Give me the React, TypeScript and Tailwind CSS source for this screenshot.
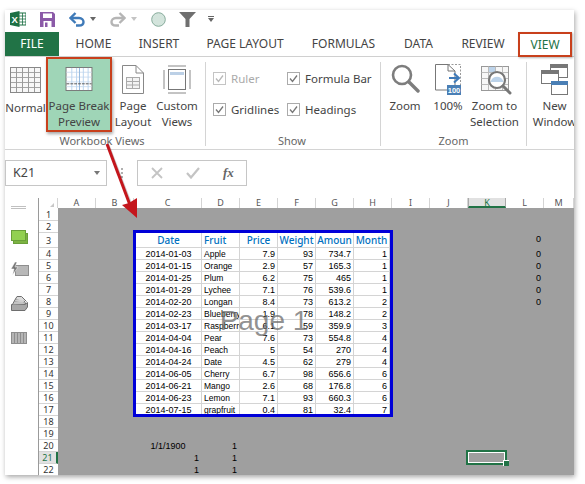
import React from "react";

const ui = "font-['Noto_Sans','Open_Sans',sans-serif]";

const tabs: [string, string][] = [
  ["HOME", "w-[63px]"],
  ["INSERT", "w-[68px]"],
  ["PAGE LAYOUT", "w-[104px]"],
  ["FORMULAS", "w-[93px]"],
  ["DATA", "w-[57px]"],
  ["REVIEW", "w-[72px]"],
];

const rows: string[][] = [
  ["2014-01-03", "Apple", "7.9", "93", "734.7", "1"],
  ["2014-01-15", "Orange", "2.9", "57", "165.3", "1"],
  ["2014-01-25", "Plum", "6.2", "75", "465", "1"],
  ["2014-01-29", "Lychee", "7.1", "76", "539.6", "1"],
  ["2014-02-20", "Longan", "8.4", "73", "613.2", "2"],
  ["2014-02-23", "Blueberry", "1.9", "78", "148.2", "2"],
  ["2014-03-17", "Raspberry", "6.1", "59", "359.9", "3"],
  ["2014-04-04", "Pear", "7.6", "73", "554.8", "4"],
  ["2014-04-16", "Peach", "5", "54", "270", "4"],
  ["2014-04-24", "Date", "4.5", "62", "279", "4"],
  ["2014-06-05", "Cherry", "6.7", "98", "656.6", "6"],
  ["2014-06-21", "Mango", "2.6", "68", "176.8", "6"],
  ["2014-06-23", "Lemon", "7.1", "93", "660.3", "6"],
  ["2014-07-15", "grapfruit", "0.4", "81", "32.4", "7"],
];

const colHeaders: [string, string][] = [
  ["A", "w-[38px]"], ["B", "w-[38px]"], ["C", "w-[68px]"], ["D", "w-[38px]"], ["E", "w-[38px]"],
  ["F", "w-[38px]"], ["G", "w-[38px]"], ["H", "w-[38px]"], ["I", "w-[38px]"], ["J", "w-[38px]"],
  ["K", "w-[38px]"], ["L", "w-[38px]"], ["M", "w-[30px]"],
];

const rowHeights: string[] = [
  "h-[13px]", "h-[12px]", "h-[15px]",
  ...Array.from({ length: 19 }, () => "h-[12px]"),
];

const dataColW = ["w-[66px]", "w-[38px]", "w-[38px]", "w-[38px]", "w-[38px]", "w-[36px]"];

function Label({ children }: { children: React.ReactNode }) {
  return <div className="text-[11.5px] leading-[16px] text-[#444] text-center whitespace-nowrap">{children}</div>;
}

function GridIcon() {
  return (
    <svg width="31" height="26" viewBox="0 0 31 26">
      <rect x="0.5" y="0.5" width="30" height="25" fill="#f7f7f7" stroke="#888" />
      {[5, 10, 15, 20].map((y) => (
        <line key={y} x1="1" x2="30" y1={y + 0.5} y2={y + 0.5} stroke="#a5a5a5" />
      ))}
      {[6, 12, 18, 24].map((x) => (
        <line key={x} x1={x + 0.5} x2={x + 0.5} y1="1" y2="25" stroke="#9a9a9a" />
      ))}
    </svg>
  );
}

function PageBreakIcon() {
  return (
    <svg width="28" height="25" viewBox="0 0 28 25">
      <rect x="0.5" y="0.5" width="27" height="24" fill="#fff" stroke="#777" />
      {[5, 10, 15, 20].map((y) => (
        <line key={y} x1="1" x2="27" y1={y + 0.5} y2={y + 0.5} stroke="#cfdff0" />
      ))}
      {[6, 11, 18, 23].map((x) => (
        <line key={x} x1={x + 0.5} x2={x + 0.5} y1="1" y2="24" stroke="#b9d4ee" />
      ))}
      <line x1="14.5" x2="14.5" y1="1" y2="24" stroke="#8fb6dd" />
      <line x1="1" x2="27" y1="17.5" y2="17.5" stroke="#555" strokeDasharray="3 1" />
    </svg>
  );
}

function PageIcon() {
  return (
    <svg width="22" height="29" viewBox="0 0 22 29">
      <path d="M0.5 0.5H14L21.5 8V28.5H0.5Z" fill="#fff" stroke="#888" />
      <path d="M14 0.5V8H21.5" fill="none" stroke="#888" />
      <rect x="4.5" y="12.5" width="13" height="11" fill="#f3f3f3" stroke="#aaa" />
      <path d="M4.5 16.5H17.5M4.5 20H17.5M10.5 12.5V23.5" stroke="#aaa" />
    </svg>
  );
}

function CustomViewsIcon() {
  return (
    <svg width="28" height="29" viewBox="0 0 28 29">
      <path d="M5 1H23M5 28H23M1 5V24M27 5V24" stroke="#888" fill="none" />
      <rect x="5.5" y="4.5" width="17" height="20" fill="#fff" stroke="#777" />
      <rect x="7" y="7" width="14" height="3" fill="#bcd0e6" />
    </svg>
  );
}

function Check({ disabled }: { disabled?: boolean }) {
  return (
    <svg width="13" height="13" viewBox="0 0 13 13" className="shrink-0">
      <rect x="0.5" y="0.5" width="12" height="12" fill="#fff" stroke={disabled ? "#c4c4c4" : "#ababab"} />
      <path d="M3 6.5L5.5 9.5L10 3.5" fill="none" stroke={disabled ? "#b8b8b8" : "#777"} strokeWidth="1.3" />
    </svg>
  );
}

function MagnifierIcon() {
  return (
    <svg width="29" height="29" viewBox="0 0 29 29">
      <circle cx="11" cy="11" r="9" fill="#fff" stroke="#7d7d7d" strokeWidth="2.6" />
      <path d="M18 18L27 27" stroke="#7d7d7d" strokeWidth="3.4" strokeLinecap="round" />
    </svg>
  );
}

function HundredIcon() {
  return (
    <svg width="27" height="31" viewBox="0 0 27 31">
      <path d="M13 0.5H25.5V24" fill="none" stroke="#999" strokeDasharray="2 1.5" />
      <path d="M0.5 0.5H13L20 7V26H0.5Z" fill="#fff" stroke="#777" />
      <path d="M13 0.5V7H20" fill="none" stroke="#777" />
      <path d="M14 14H23M19 9.5L24 14L19 18.5" fill="none" stroke="#3f7ab8" strokeWidth="2" />
      <rect x="12" y="21" width="14" height="10" fill="#4a7fb5" />
      <text x="19" y="29.2" textAnchor="middle" fontSize="7.5" fontWeight="700" fill="#fff" fontFamily="Liberation Sans, sans-serif">100</text>
    </svg>
  );
}

function ZoomSelIcon() {
  return (
    <svg width="31" height="29" viewBox="0 0 31 29">
      <rect x="0.5" y="0.5" width="27" height="24" fill="#f7f7f7" stroke="#999" />
      <path d="M0.5 6.5H27M0.5 12.5H27M0.5 18.5H27M7.5 0.5V24M14.5 0.5V24M21.5 0.5V24" stroke="#bbb" />
      <rect x="8" y="1" width="6" height="5" fill="#bcd3ea" />
      <circle cx="16" cy="14" r="8" fill="#fff" stroke="#777" strokeWidth="2.2" />
      <path d="M9.5 16C11 9 21 9 22.5 16Z" fill="#bcd3ea" />
      <path d="M22 20L29 27" stroke="#777" strokeWidth="3" strokeLinecap="round" />
    </svg>
  );
}

function NewWindowIcon() {
  return (
    <svg width="27" height="31" viewBox="0 0 27 31">
      <rect x="9.5" y="0.5" width="17" height="13" fill="#fff" stroke="#777" />
      <rect x="9" y="0" width="18" height="4" fill="#777" />
      <rect x="0.5" y="6.5" width="17" height="13" fill="#fff" stroke="#777" />
      <rect x="0" y="6" width="18" height="4" fill="#777" />
      <rect x="10.5" y="17.5" width="16" height="13" fill="#fff" stroke="#777" />
      <rect x="10" y="17" width="17" height="4" fill="#4a7fb5" />
    </svg>
  );
}

function Sep() {
  return <div className="w-px h-[84px] bg-[#d4d4d4] mt-[5px] shrink-0" />;
}

function Caret({ color }: { color: string }) {
  return (
    <svg width="6" height="4" viewBox="0 0 6 4" className="shrink-0">
      <path d="M0 0H6L3 4Z" fill={color} />
    </svg>
  );
}

function ExcelLogo() {
  return (
    <svg width="16" height="16" viewBox="0 0 16 16">
      <rect x="5" y="2" width="11" height="12" fill="#fff" stroke="#1d7044" />
      <path d="M9 5H16M9 8H16M9 11H16M12.5 2V14" stroke="#1d7044" strokeWidth="0.8" />
      <path d="M0 2L9.5 0V16L0 14Z" fill="#1d7044" />
      <text x="4.7" y="11.6" textAnchor="middle" fontSize="9.5" fontWeight="700" fill="#fff" fontFamily="Liberation Sans, sans-serif">X</text>
    </svg>
  );
}

function SaveIcon() {
  return (
    <svg width="15" height="15" viewBox="0 0 15 15">
      <path d="M0 0H13L15 2V15H0Z" fill="#8b5aa8" />
      <rect x="3" y="1.5" width="9" height="4.5" fill="#fff" />
      <rect x="3.5" y="9" width="8" height="6" fill="#fff" />
      <rect x="5" y="10.5" width="2.5" height="4.5" fill="#8b5aa8" />
    </svg>
  );
}

function UndoIcon({ color, flip }: { color: string; flip?: boolean }) {
  return (
    <svg width="16" height="15" viewBox="0 0 16 15" className={flip ? "-scale-x-100" : ""}>
      <path d="M2 6H10C13 6 14.5 8 14.5 10C14.5 12 13 13.5 10 13.5H7" fill="none" stroke={color} strokeWidth="2.4" />
      <path d="M6.5 1L1.5 6L6.5 11" fill="none" stroke={color} strokeWidth="2.4" />
    </svg>
  );
}

export default function App() {
  return (
    <div className={`relative w-[585px] h-[484px] bg-white overflow-hidden ${ui}`}>
      <div className="ml-[5px] mt-[10px] w-[569px] h-[465px] flex flex-col bg-white shadow-[1px_2px_5px_rgba(0,0,0,0.35)]">
        {/* Quick access toolbar */}
        <div className="h-[22px] flex items-center shrink-0 pb-[4px]">
          <div className="ml-[5px] flex"><ExcelLogo /></div>
          <div className="ml-[14px] flex"><SaveIcon /></div>
          <div className="ml-[14px] flex"><UndoIcon color="#3f7ab8" /></div>
          <div className="ml-[5px] flex"><Caret color="#666" /></div>
          <div className="ml-[14px] flex"><UndoIcon color="#b5b5b5" flip /></div>
          <div className="ml-[5px] flex"><Caret color="#c4c4c4" /></div>
          <div className="ml-[14px] flex">
            <svg width="15" height="15" viewBox="0 0 15 15">
              <circle cx="7.5" cy="7.5" r="6.8" fill="#d3e4dc" stroke="#86ab9b" />
            </svg>
          </div>
          <div className="ml-[13px] flex">
            <svg width="17" height="15" viewBox="0 0 17 15">
              <path d="M0 0H17L10.5 7V15H6.5V7Z" fill="#6f6f6f" />
            </svg>
          </div>
          <div className="ml-[12px] flex flex-col items-center gap-[1px]">
            <div className="w-[6px] h-px bg-[#666]" />
            <Caret color="#666" />
          </div>
        </div>

        {/* Tabs */}
        <div className="h-[25px] flex shrink-0 border-b border-[#d0d0d0]">
          <div className="w-[54px] h-[24px] bg-[#217346] text-white text-[12px] flex items-center justify-center">FILE</div>
          <div className="flex ml-[3px]">
            {tabs.map(([t, w]) => (
              <div key={t} className={`${w} h-[24px] flex items-center justify-center text-[12px] text-[#444] whitespace-nowrap`}>
                {t}
              </div>
            ))}
            <div className="w-[54px] h-[25px] -ml-px border-2 border-[#c8401c] text-[#217346] text-[12px] flex items-center justify-center shadow-[1px_1px_2px_rgba(0,0,0,0.3)]">
              VIEW
            </div>
          </div>
        </div>

        {/* Ribbon */}
        <div className="h-[93px] flex shrink-0 border-b border-[#d4d4d4] overflow-hidden">
          {/* Workbook Views */}
          <div className="w-[200px] shrink-0 flex flex-col">
            <div className="flex h-[75px]">
              <div className="w-[41px] flex flex-col items-center pt-[10px]">
                <GridIcon />
                <div className="mt-[7px]"><Label>Normal</Label></div>
              </div>
              <div className="w-[66px] h-[75px] border-2 border-[#c8401c] bg-[#9fd5b7] flex flex-col items-center pt-[8px] shadow-[1px_2px_3px_rgba(0,0,0,0.35)]">
                <PageBreakIcon />
                <div className="mt-[7px]"><Label>Page Break<br />Preview</Label></div>
              </div>
              <div className="w-[42px] flex flex-col items-center pt-[8px]">
                <PageIcon />
                <div className="mt-[4px]"><Label>Page<br />Layout</Label></div>
              </div>
              <div className="w-[46px] flex flex-col items-center pt-[8px]">
                <CustomViewsIcon />
                <div className="mt-[4px]"><Label>Custom<br />Views</Label></div>
              </div>
            </div>
            <div className="text-[11px] leading-[14px] text-[#666] text-center mt-[2px] pr-[6px] whitespace-nowrap">Workbook Views</div>
          </div>
          <Sep />
          {/* Show */}
          <div className="w-[174px] shrink-0 flex flex-col">
            <div className="h-[75px] flex pl-[7px] pt-[15px] gap-[16px]">
              <div className="w-[58px] flex flex-col gap-[18px]">
                <div className="flex items-center gap-[5px] h-[13px] text-[11.5px] text-[#aaa]"><Check disabled />Ruler</div>
                <div className="flex items-center gap-[5px] h-[13px] text-[11.5px] text-[#444] whitespace-nowrap"><Check />Gridlines</div>
              </div>
              <div className="flex flex-col gap-[18px]">
                <div className="flex items-center gap-[5px] h-[13px] text-[11.5px] text-[#444] whitespace-nowrap"><Check />Formula Bar</div>
                <div className="flex items-center gap-[5px] h-[13px] text-[11.5px] text-[#444] whitespace-nowrap"><Check />Headings</div>
              </div>
            </div>
            <div className="text-[11px] leading-[14px] text-[#666] text-center mt-[2px] pr-[2px]">Show</div>
          </div>
          <Sep />
          {/* Zoom */}
          <div className="w-[145px] shrink-0 flex flex-col">
            <div className="h-[75px] flex">
              <div className="w-[48px] flex flex-col items-center pt-[7px]">
                <MagnifierIcon />
                <div className="mt-[5px]"><Label>Zoom</Label></div>
              </div>
              <div className="w-[38px] flex flex-col items-center pt-[7px]">
                <HundredIcon />
                <div className="mt-[3px]"><Label>100%</Label></div>
              </div>
              <div className="w-[55px] flex flex-col items-center pt-[9px]">
                <div className="ml-[3px]"><ZoomSelIcon /></div>
                <div className="mt-[3px]"><Label>Zoom to<br />Selection</Label></div>
              </div>
            </div>
            <div className="text-[11px] leading-[14px] text-[#666] text-center mt-[2px]">Zoom</div>
          </div>
          <Sep />
          {/* Window */}
          <div className="flex-1 min-w-0 overflow-hidden flex flex-col items-center pt-[7px] pl-[8px]">
            <NewWindowIcon />
            <div className="mt-[3px]"><Label>New<br />Window</Label></div>
          </div>
        </div>

        {/* Formula bar */}
        <div className="h-[48px] shrink-0 flex items-start pt-[10px]">
          <div className="w-[102px] h-[26px] border border-[#c6c6c6] flex items-center justify-between pl-[7px] pr-[6px] text-[12.5px] text-[#444]">
            K21
            <Caret color="#777" />
          </div>
          <div className="w-[30px] h-[26px] flex flex-col items-center justify-center gap-[2px]">
            <div className="w-[2px] h-[2px] bg-[#b0b0b0]" />
            <div className="w-[2px] h-[2px] bg-[#b0b0b0]" />
            <div className="w-[2px] h-[2px] bg-[#b0b0b0]" />
          </div>
          <div className="w-[110px] h-[26px] border border-[#c6c6c6] flex items-center">
            <svg width="12" height="12" viewBox="0 0 12 12" className="ml-[13px]">
              <path d="M1 1L11 11M11 1L1 11" stroke="#c4c4c4" strokeWidth="1.8" />
            </svg>
            <svg width="14" height="12" viewBox="0 0 14 12" className="ml-[23px]">
              <path d="M1 6L5 10.5L13 1" fill="none" stroke="#c4c4c4" strokeWidth="2.2" />
            </svg>
            <span className="ml-[23px] font-['Liberation_Serif',serif] italic font-bold text-[13px] text-[#666]">fx</span>
          </div>
        </div>

        {/* Sheet */}
        <div className="flex-1 flex min-h-0">
          {/* Left rail */}
          <div className="w-[34px] shrink-0 border-r border-[#9a9a9a] flex flex-col items-start pl-[6px]">
            <div className="mt-[8px] flex flex-col gap-[1px] w-[15px]">
              <div className="h-px bg-[#c0c0c0]" />
              <div className="h-px bg-[#c0c0c0]" />
            </div>
            <svg width="17" height="14" viewBox="0 0 17 14" className="mt-[21px]">
              <rect x="2.5" y="3.5" width="14" height="10" fill="#7cb342" stroke="#6a9f3a" />
              <rect x="0.5" y="0.5" width="14" height="10" fill="#92d050" stroke="#6a9f3a" />
            </svg>
            <svg width="18" height="14" viewBox="0 0 18 14" className="mt-[18px]">
              <rect x="4.5" y="3.5" width="13" height="10" fill="#b8b8b8" stroke="#8e8e8e" />
              <path d="M4 0L0 7H3L1.5 13L7 5H4L6 0Z" fill="#777" stroke="#fff" strokeWidth="0.5" />
            </svg>
            <svg width="17" height="15" viewBox="0 0 17 15" className="mt-[20px]">
              <path d="M0.5 8.5H14L16.5 6.5V11L14 14.5H0.5Z" fill="#a8a8a8" stroke="#6e6e6e" />
              <path d="M1.5 8.5L3 5.5H12L15 8" fill="#c4c4c4" stroke="#6e6e6e" />
              <path d="M3 5.5L4.5 3H11L14.5 6.5" fill="#cfcfcf" stroke="#6e6e6e" />
              <path d="M4.5 3L6 0.5H10.5L15.5 5.5" fill="#dcdcdc" stroke="#6e6e6e" />
            </svg>
            <svg width="16" height="12" viewBox="0 0 16 12" className="mt-[21px]">
              <rect x="0.5" y="0.5" width="15" height="11" fill="#b5b5b5" stroke="#8e8e8e" />
              <path d="M3.5 0.5V11.5M6.5 0.5V11.5M9.5 0.5V11.5M12.5 0.5V11.5" stroke="#8e8e8e" />
            </svg>
          </div>

          {/* Sheet area */}
          <div className="flex-1 min-w-0 flex flex-col">
            {/* Column headers */}
            <div className="h-[10px] flex shrink-0 bg-white text-[9px] leading-[10px] text-[#555]">
              <div className="w-[19px] flex justify-end items-end pr-[3px] pb-px border-r border-[#d4d4d4]">
                <svg width="4" height="4" viewBox="0 0 4 4"><path d="M4 0V4H0Z" fill="#c8c8c8" /></svg>
              </div>
              {colHeaders.map(([c, w]) => (
                <div
                  key={c}
                  className={`${w} text-center ${c === "K" ? "bg-[#e1e1e1] border-b-2 border-[#217346] text-[#217346] border-x border-x-[#aaa]" : "border-r border-[#d4d4d4]"}`}
                >
                  {c}
                </div>
              ))}
            </div>
            <div className="flex-1 flex min-h-0">
              {/* Row headers */}
              <div className="w-[19px] shrink-0 flex flex-col text-[9px] text-[#333] bg-white">
                {rowHeights.map((h, i) => (
                  <div
                    key={i}
                    className={`${h} leading-[11px] flex items-center justify-center shrink-0 border-b border-[#d4d4d4] ${i === 20 ? "bg-[#e1e1e1] border-r-2 border-r-[#217346] text-[#217346]" : ""}`}
                  >
                    {i + 1}
                  </div>
                ))}
              </div>
              {/* Gray canvas */}
              <div className="flex-1 grid grid-cols-[38px_38px_68px_repeat(9,38px)_30px] grid-rows-[13px_12px_15px_repeat(19,12px)] bg-[#9f9f9f] font-['Liberation_Sans',sans-serif] text-[9px] leading-[12px] text-black">
                {/* Page 1 print area */}
                <div className="col-start-3 col-span-6 row-start-3 row-span-15 -mx-px -mt-[3px] -mb-px border-[3px] border-[#0000d8] bg-white relative overflow-hidden">
                  <div className="flex h-[15px] border-b border-[#d4d4d4]">
                    {["Date", "Fruit", "Price", "Weight", "Amoun", "Month"].map((h, i) => (
                      <div
                        key={h}
                        className={`${dataColW[i]} shrink-0 border-r border-[#d4d4d4] overflow-hidden whitespace-nowrap text-[10px] leading-[14px] font-['Noto_Sans',sans-serif] font-medium text-[#0070c0] ${i === 1 ? "pl-[2px]" : "text-center"}`}
                      >
                        {h}
                      </div>
                    ))}
                  </div>
                  {rows.map((r) => (
                    <div key={r[0]} className="flex h-[12px] border-b border-[#d4d4d4]">
                      {r.map((v, i) => (
                        <div
                          key={i}
                          className={`${dataColW[i]} shrink-0 border-r border-[#d4d4d4] overflow-hidden whitespace-nowrap ${i === 0 ? "text-center" : i === 1 ? "pl-[2px] text-[8.5px]" : "text-right pr-[2px]"}`}
                        >
                          {v}
                        </div>
                      ))}
                    </div>
                  ))}
                  <div className="absolute inset-0 flex items-center justify-center pb-[6px] pl-[2px] text-[28px] leading-none text-[#6e6e6e]/75 pointer-events-none">
                    Page 1
                  </div>
                </div>

                {/* Loose values */}
                <div className="col-start-12 row-start-3 text-right pr-[3px]">0</div>
                <div className="col-start-12 row-start-4 text-right pr-[3px]">0</div>
                <div className="col-start-12 row-start-5 text-right pr-[3px]">0</div>
                <div className="col-start-12 row-start-6 text-right pr-[3px]">0</div>
                <div className="col-start-12 row-start-7 text-right pr-[3px]">0</div>
                <div className="col-start-12 row-start-8 text-right pr-[3px]">0</div>

                <div className="col-start-3 row-start-20 text-center">1/1/1900</div>
                <div className="col-start-4 row-start-20 text-right pr-[3px]">1</div>
                <div className="col-start-3 row-start-21 text-right pr-[3px]">1</div>
                <div className="col-start-4 row-start-21 text-right pr-[3px]">1</div>
                <div className="col-start-3 row-start-22 text-right pr-[3px]">1</div>
                <div className="col-start-4 row-start-22 text-right pr-[3px]">1</div>

                {/* Active cell K21 */}
                <div className="col-start-11 row-start-21 relative">
                  <div className="absolute -left-[2px] -top-[2px] w-[41px] h-[15px] border-2 border-[#217346]">
                    <div className="w-full h-full border border-white" />
                  </div>
                  <div className="absolute left-[35px] top-[8px] w-[6px] h-[6px] bg-[#217346] border-l border-t border-white" />
                </div>
              </div>
            </div>
          </div>
        </div>
      </div>

      {/* Red callout arrow */}
      <svg className="absolute left-0 top-0 pointer-events-none" width="585" height="484" viewBox="0 0 585 484">
        <path d="M107 144L130 204" stroke="#000" strokeOpacity="0.2" strokeWidth="3" transform="translate(1 1)" />
        <path d="M107 144L130 205" stroke="#c4161c" strokeWidth="3" />
        <path d="M137 218L122 205L129 203L137 198Z" fill="#c4161c" />
      </svg>
    </div>
  );
}
